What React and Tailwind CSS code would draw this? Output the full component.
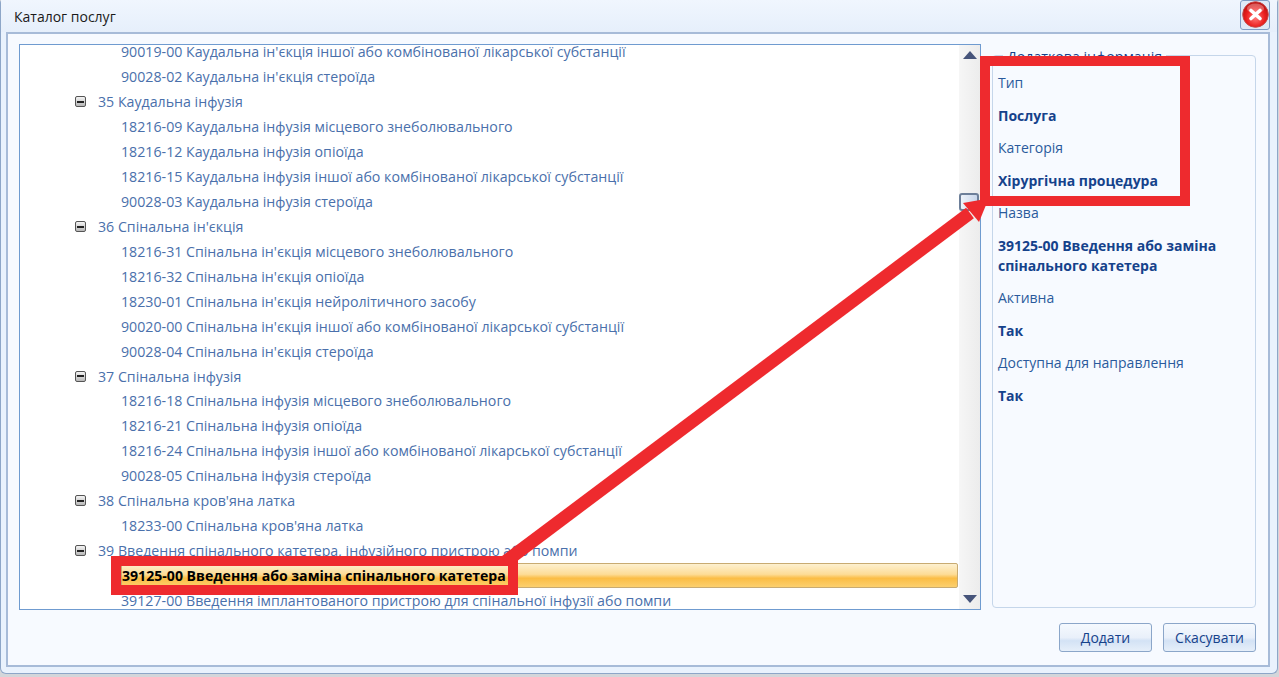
import React from 'react';

const rows = [
  [2, '90019-00 Каудальна ін\'єкція іншої або комбінованої лікарської субстанції'],
  [2, '90028-02 Каудальна ін\'єкція стероїда'],
  [1, '35 Каудальна інфузія'],
  [2, '18216-09 Каудальна інфузія місцевого знеболювального'],
  [2, '18216-12 Каудальна інфузія опіоїда'],
  [2, '18216-15 Каудальна інфузія іншої або комбінованої лікарської субстанції'],
  [2, '90028-03 Каудальна інфузія стероїда'],
  [1, '36 Спінальна ін\'єкція'],
  [2, '18216-31 Спінальна ін\'єкція місцевого знеболювального'],
  [2, '18216-32 Спінальна ін\'єкція опіоїда'],
  [2, '18230-01 Спінальна ін\'єкція нейролітичного засобу'],
  [2, '90020-00 Спінальна ін\'єкція іншої або комбінованої лікарської субстанції'],
  [2, '90028-04 Спінальна ін\'єкція стероїда'],
  [1, '37 Спінальна інфузія'],
  [2, '18216-18 Спінальна інфузія місцевого знеболювального'],
  [2, '18216-21 Спінальна інфузія опіоїда'],
  [2, '18216-24 Спінальна інфузія іншої або комбінованої лікарської субстанції'],
  [2, '90028-05 Спінальна інфузія стероїда'],
  [1, '38 Спінальна кров\'яна латка'],
  [2, '18233-00 Спінальна кров\'яна латка'],
  [1, '39 Введення спінального катетера, інфузійного пристрою або помпи'],
  [3, '39125-00 Введення або заміна спінального катетера'],
  [2, '39127-00 Введення імплантованого пристрою для спінальної інфузії або помпи'],
];

const info = [
  ['Тип', false],
  ['Послуга', true],
  ['Категорія', false],
  ['Хірургічна процедура', true],
  ['Назва', false],
  ['39125-00 Введення або заміна спінального катетера', true],
  ['Активна', false],
  ['Так', true],
  ['Доступна для направлення', false],
  ['Так', true],
];

function Row({ level, text }) {
  if (level === 1) {
    return (
      <div className="h-[24.95px] flex items-center pl-[55px] text-[#4a70ab]">
        <span className="w-[11px] h-[11px] rounded-[2px] border border-[#555] bg-gradient-to-b from-[#f4f4f4] to-[#b8b8b8] flex items-center justify-center mr-[12px]">
          <span className="w-[7px] h-[2px] bg-[#222]" />
        </span>
        <span>{text}</span>
      </div>
    );
  }
  if (level === 3) {
    return (
      <div className="h-[24.95px] flex items-center pl-[101px] mr-[1px]">
        <span className="flex-1 h-[25px] flex items-center rounded-[2px] border border-[#c8ab72] bg-[linear-gradient(to_bottom,#fdf0cf_0%,#fddc96_45%,#fbbd45_62%,#fcd06f_100%)] font-bold text-black text-[14.1px]">
          {text}
        </span>
      </div>
    );
  }
  return (
    <div className="h-[24.95px] flex items-center pl-[101px] text-[#4a70ab] whitespace-nowrap">{text}</div>
  );
}

function Btn({ children }) {
  return (
    <button className="w-[93px] h-[29px] rounded-[3px] border border-[#8ba6c9] bg-[linear-gradient(to_bottom,#f5f9fe_0%,#e9f0fa_50%,#d3e2f5_62%,#e6effa_100%)] text-[#15428b] text-[14px]">
      {children}
    </button>
  );
}

export default function App() {
  return (
    <div className="relative w-[1279px] h-[677px] overflow-hidden bg-[#d3d6da] font-['Open_Sans','Noto_Sans',sans-serif] text-[14.2px]">
      <div className="w-[1278px] h-[674px] rounded-b-[6px] rounded-t-[3px] border-x border-b border-[#8da6c8] bg-[#e9f2fd]">
        {/* Title bar */}
        <div className="h-[32px] flex items-center justify-between pl-[13px] pr-[7px] bg-gradient-to-b from-[#f0f6fe] to-[#e6effb]">
          <span className="text-[#1a1a1a] text-[14px]">Каталог послуг</span>
          <button className="w-[30px] h-[30px] -mt-[3px] rounded-[3px] border border-[#7f9cc4] bg-[#dfe9f7] flex items-center justify-center">
            <svg width="27" height="27" viewBox="0 0 27 27">
              <defs>
                <radialGradient id="closeRed" cx="50%" cy="62%" r="60%">
                  <stop offset="0%" stopColor="#ff7a7a" />
                  <stop offset="60%" stopColor="#ec2020" />
                  <stop offset="100%" stopColor="#b80f0f" />
                </radialGradient>
              </defs>
              <circle cx="13.5" cy="13.5" r="12.8" fill="url(#closeRed)" stroke="#c44a4a" />
              <ellipse cx="13.5" cy="7.5" rx="8.5" ry="5" fill="#fff" opacity="0.3" />
              <path d="M9 9.5 L18 17.5 M18 9.5 L9 17.5" stroke="#fff" strokeWidth="3.6" strokeLinecap="round" />
            </svg>
          </button>
        </div>

        {/* Body */}
        <div className="ml-[5px] mr-[7px] h-[635px] border-2 border-[#a7bbd8] bg-[#f7faff] pt-[10px] pl-[11px] pr-[12px]">
          <div className="flex gap-[11px] items-start">
            <div className="relative shrink-0 w-[962px] h-[566px] border border-[#6f9bd0] bg-white overflow-hidden flex">
              <div className="flex-1 overflow-hidden -mt-[5.5px]">
                {rows.map(([level, text], i) => (
                  <Row key={i} level={level} text={text} />
                ))}
              </div>
              {/* Scrollbar */}
              <div className="w-[21px] h-full bg-gradient-to-r from-[#f6f6f6] to-[#ececec] flex flex-col items-center justify-between py-[6px]">
                <svg width="14" height="8" viewBox="0 0 14 8"><path d="M7 0 L14 8 H0 Z" fill="#46547a" /></svg>
                <svg width="14" height="8" viewBox="0 0 14 8"><path d="M0 0 H14 L7 8 Z" fill="#46547a" /></svg>
              </div>
              <div className="absolute left-[939px] top-[148px] w-[20px] h-[18px] rounded-[3px] border-2 border-[#6d7f99] bg-gradient-to-r from-[#eef3fa] to-[#c9d6ea]" />
            </div>

            {/* Additional info */}
            <div className="relative shrink-0 w-[264px] h-[553px] mt-[11px] rounded-[4px] border border-[#c5d6ea] px-[5px] pt-[17px] text-[#15428b] text-[14px]">
              <span className="absolute left-[10px] -top-[10px] px-[4px] bg-[#f7faff] text-[#15428b] text-[14.2px]">Додаткова інформація</span>
              {info.map(([text, bold], i) => (
                <div key={i} className={bold ? 'font-bold leading-[20px] mb-[12.5px]' : 'text-[#2a5a9c] leading-[20px] mb-[12.5px]'}>
                  {text}
                </div>
              ))}
            </div>
          </div>

          <div className="flex justify-end gap-[11px] mt-[13px]">
            <Btn>Додати</Btn>
            <Btn>Скасувати</Btn>
          </div>
        </div>
      </div>

      {/* Red annotations lying over the window */}
      <div className="absolute left-[980px] top-[56px] w-[210px] h-[150px] border-[10px] border-[#ee2a2e]" />
      <div className="absolute left-[111px] top-[556px] w-[407px] h-[39px] border-[10px] border-[#ee2a2e]" />
      <svg className="absolute left-0 top-0 pointer-events-none" width="1279" height="677" viewBox="0 0 1279 677">
        <path d="M505 562 L970 213" stroke="#ee2a2e" strokeWidth="13" fill="none" />
        <path d="M963 203 L979 222 L986 205 L980 200 Z" fill="#ee2a2e" />
      </svg>
    </div>
  );
}
